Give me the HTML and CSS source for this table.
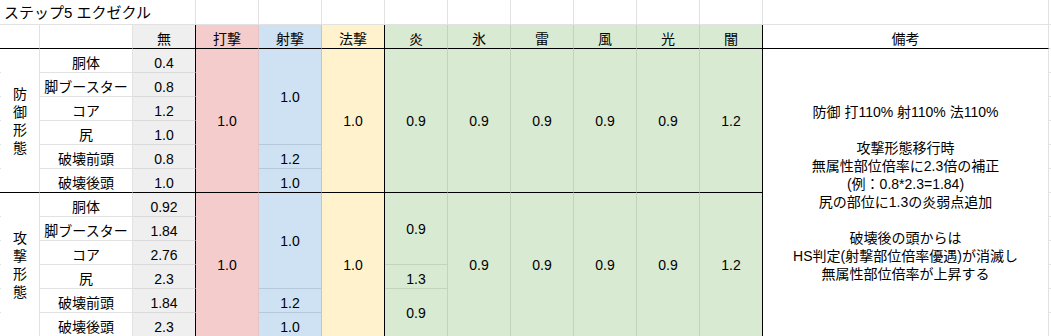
FILE: index.html
```html
<!DOCTYPE html>
<html lang="ja">
<head>
<meta charset="utf-8">
<title>ステップ5 エクゼクル</title>
<link rel="stylesheet" href="styles.css">
</head>
<body>
<div class="sheet">
  <!-- row 1: title -->
  <div class="c s"></div>
  <div class="c title span-c3">ステップ5 エクゼクル</div>
  <div class="c"></div><div class="c"></div><div class="c"></div>
  <div class="c"></div><div class="c"></div><div class="c"></div>
  <div class="c"></div><div class="c"></div><div class="c"></div>
  <div class="c"></div>
  <div class="c x"></div>

  <!-- row 2: header -->
  <div class="c s hdr"></div>
  <div class="c hdr"></div>
  <div class="c hdr"></div>
  <div class="c one nul hdr">無</div>
  <div class="c one blow hdr">打撃</div>
  <div class="c one shot hdr">射撃</div>
  <div class="c one mag hdr">法撃</div>
  <div class="c one elem hdr">炎</div>
  <div class="c one elem hdr">氷</div>
  <div class="c one elem hdr">雷</div>
  <div class="c one elem hdr">風</div>
  <div class="c one elem hdr">光</div>
  <div class="c one elem last hdr">闇</div>
  <div class="c one hdr">備考</div>
  <div class="c x"></div>

  <!-- row 3 -->
  <div class="c s"></div>
  <div class="c mid span-r6 sep"><span class="vert">防御形態</span></div>
  <div class="c one">胴体</div>
  <div class="c one nul">0.4</div>
  <div class="c mid blow span-r6 sep">1.0</div>
  <div class="c mid shot span-r4">1.0</div>
  <div class="c mid mag span-r6 sep">1.0</div>
  <div class="c mid elem span-r6 sep">0.9</div>
  <div class="c mid elem span-r6 sep">0.9</div>
  <div class="c mid elem span-r6 sep">0.9</div>
  <div class="c mid elem span-r6 sep">0.9</div>
  <div class="c mid elem span-r6 sep">0.9</div>
  <div class="c mid elem last span-r6 sep">1.2</div>
  <div class="c mid note span-r12">防御 打110% 射110% 法110%<br><br>攻撃形態移行時<br>無属性部位倍率に2.3倍の補正<br>(例：0.8*2.3=1.84)<br>尻の部位に1.3の炎弱点追加<br><br>破壊後の頭からは<br>HS判定(射撃部位倍率優遇)が消滅し<br>無属性部位倍率が上昇する</div>
  <div class="c x"></div>

  <!-- row 4 -->
  <div class="c s"></div>
  <div class="c one">脚ブースター</div>
  <div class="c one nul">0.8</div>
  <div class="c x"></div>

  <!-- row 5 -->
  <div class="c s"></div>
  <div class="c one">コア</div>
  <div class="c one nul">1.2</div>
  <div class="c x"></div>

  <!-- row 6 -->
  <div class="c s"></div>
  <div class="c one">尻</div>
  <div class="c one nul">1.0</div>
  <div class="c x"></div>

  <!-- row 7 -->
  <div class="c s"></div>
  <div class="c one">破壊前頭</div>
  <div class="c one nul">0.8</div>
  <div class="c one shot">1.2</div>
  <div class="c x"></div>

  <!-- row 8 -->
  <div class="c s sep"></div>
  <div class="c one sep">破壊後頭</div>
  <div class="c one nul sep">1.0</div>
  <div class="c one shot sep">1.0</div>
  <div class="c x"></div>

  <!-- row 9 -->
  <div class="c s"></div>
  <div class="c mid span-r6"><span class="vert">攻撃形態</span></div>
  <div class="c one">胴体</div>
  <div class="c one nul">0.92</div>
  <div class="c mid blow span-r6">1.0</div>
  <div class="c mid shot span-r4">1.0</div>
  <div class="c mid mag span-r6">1.0</div>
  <div class="c mid elem span-r3">0.9</div>
  <div class="c mid elem span-r6">0.9</div>
  <div class="c mid elem span-r6">0.9</div>
  <div class="c mid elem span-r6">0.9</div>
  <div class="c mid elem span-r6">0.9</div>
  <div class="c mid elem last span-r6">1.2</div>
  <div class="c x"></div>

  <!-- row 10 -->
  <div class="c s"></div>
  <div class="c one">脚ブースター</div>
  <div class="c one nul">1.84</div>
  <div class="c x"></div>

  <!-- row 11 -->
  <div class="c s"></div>
  <div class="c one">コア</div>
  <div class="c one nul">2.76</div>
  <div class="c x"></div>

  <!-- row 12 -->
  <div class="c s"></div>
  <div class="c one">尻</div>
  <div class="c one nul">2.3</div>
  <div class="c one elem">1.3</div>
  <div class="c x"></div>

  <!-- row 13 -->
  <div class="c s"></div>
  <div class="c one">破壊前頭</div>
  <div class="c one nul">1.84</div>
  <div class="c one shot">1.2</div>
  <div class="c mid elem span-r2">0.9</div>
  <div class="c x"></div>

  <!-- row 14 -->
  <div class="c s"></div>
  <div class="c one">破壊後頭</div>
  <div class="c one nul">2.3</div>
  <div class="c one shot">1.0</div>
  <div class="c x"></div>
</div>
</body>
</html>
```

FILE: styles.css
```css
html, body {
  margin: 0;
  padding: 0;
  background: #fff;
}

body {
  width: 1051px;
  height: 336px;
  overflow: hidden;
  font-family: "Liberation Sans", "Noto Sans CJK JP", sans-serif;
  font-size: 14px;
  line-height: 18px;
  color: #000;
}

.sheet {
  display: grid;
  grid-template-columns: 1px 39px 93px repeat(10, 63px) 286px 2px;
  grid-template-rows: 25px repeat(13, 24px);
}

.c {
  box-sizing: border-box;
  border-right: 1px solid #e2e2e2;
  border-bottom: 1px solid #e2e2e2;
  text-align: center;
  white-space: nowrap;
  min-width: 0;
  overflow: hidden;
}

.s {
  border-right: none;
}

.x {
  border-right: none;
}

.title {
  text-align: left;
  font-size: 15px;
  padding: 4px 0 0 3px;
}

.one {
  padding-top: 5px;
}

.mid {
  display: flex;
  align-items: center;
  justify-content: center;
}

.vert {
  display: block;
  width: 14px;
  white-space: normal;
  word-break: break-all;
  line-height: 18px;
}

.note {
  white-space: nowrap;
  padding-top: 1px;
}

.span-c3 { grid-column: span 3; }
.span-r2 { grid-row: span 2; }
.span-r3 { grid-row: span 3; }
.span-r4 { grid-row: span 4; }
.span-r6 { grid-row: span 6; }
.span-r12 { grid-row: span 12; }

/* column fills */
.nul {
  background: #efefef;
  border-bottom-color: #dadada;
  border-right-color: #000;
}

.blow {
  background: #f4cccc;
  border-bottom-color: #e3bdbd;
  border-right-color: #e3c3c8;
}

.shot {
  background: #cfe2f3;
  border-bottom-color: #b5c9db;
  border-right-color: #b5c9db;
}

.mag {
  background: #fff2cc;
  border-bottom-color: #e8dcb9;
  border-right-color: #000;
}

.elem {
  background: #d9ead3;
  border-bottom-color: #c2d5bc;
  border-right-color: #c2d5bc;
}

.elem.last {
  border-right-color: #000;
}

/* thick separators */
.hdr,
.sep {
  border-bottom-color: #000;
}
```
